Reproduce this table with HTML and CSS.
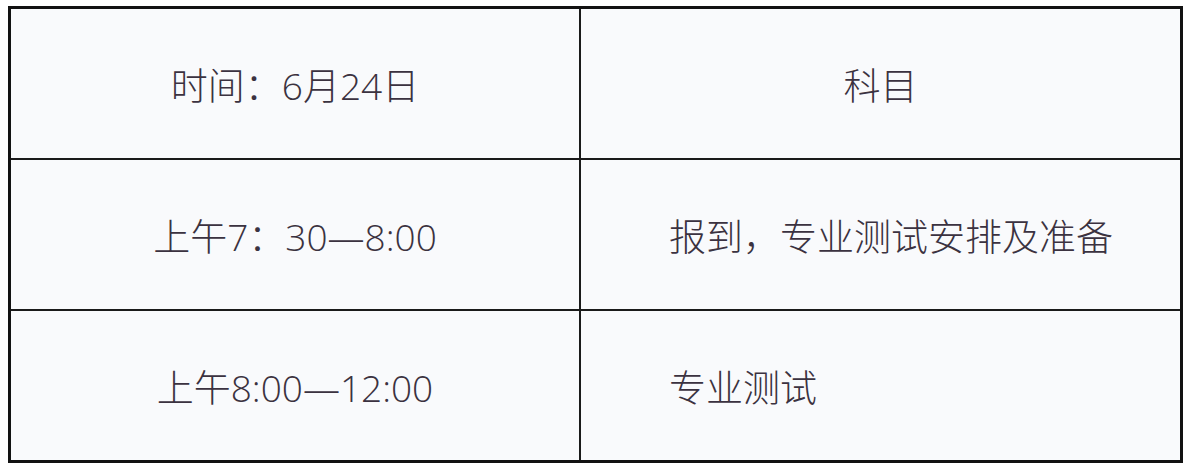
FILE: index.html
```html
<!DOCTYPE html>
<html lang="zh-CN">
<head>
<meta charset="utf-8">
<link rel="stylesheet" href="styles.css">
</head>
<body>
<table class="schedule">
  <tr>
    <td class="c1">时间：6月24日</td>
    <td class="c2 center">科目</td>
  </tr>
  <tr>
    <td class="c1">上午7：30—8:00</td>
    <td class="c2 left">报到，专业测试安排及准备</td>
  </tr>
  <tr>
    <td class="c1">上午8:00—12:00</td>
    <td class="c2 left">专业测试</td>
  </tr>
</table>
</body>
</html>
```
FILE: styles.css
```css
html, body {
  margin: 0;
  padding: 0;
  background: #ffffff;
}
.schedule {
  margin: 6px 0 0 8px;
  width: 1175px;
  border-collapse: collapse;
  border: 3px solid #121212;
  font-family: "Open Sans", "Noto Sans CJK SC", sans-serif;
  font-weight: 300;
  font-size: 37px;
  color: #3b3240;
}
.schedule td {
  border: 2px solid #1a1a1a;
  background: #f9fafc;
  height: 149px;
  padding: 0;
  vertical-align: middle;
}
.c1 {
  width: 568px;
  text-align: center;
}
.center {
  text-align: center;
}
.left {
  text-align: left;
  padding-left: 88px !important;
}
```
